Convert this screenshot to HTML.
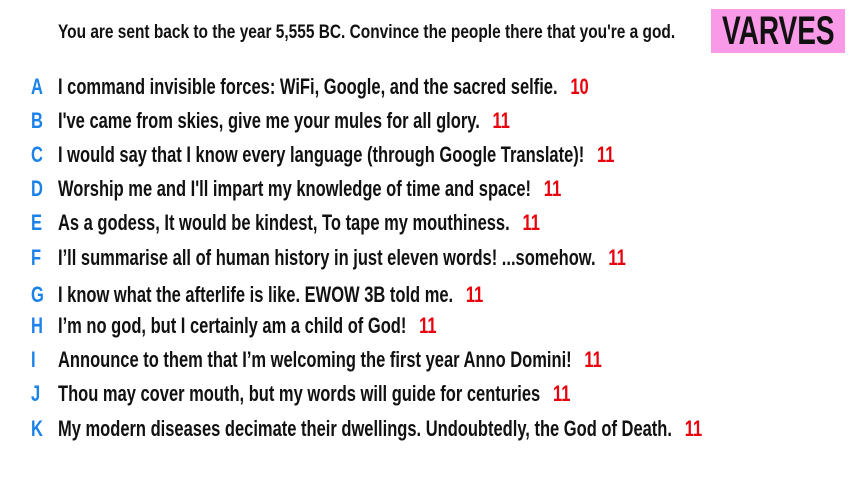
<!DOCTYPE html>
<html><head><meta charset="utf-8"><style>
html,body{margin:0;padding:0;width:853px;height:480px;background:#fff;overflow:hidden;font-family:"Liberation Sans",sans-serif;color:#111}
.t{position:absolute;white-space:nowrap;transform-origin:0 50%;}
.title{left:58px;top:22px;font-size:19px;font-weight:bold;transform:scaleX(0.813);}
.logo{position:absolute;left:711px;top:9px;width:134px;height:44px;background:#f99ae9;}
.logo span{position:absolute;left:11px;top:2px;font-size:40px;line-height:40px;font-weight:bold;transform:scaleX(0.70);transform-origin:0 0;color:#111;}
.row{position:absolute;left:0;height:30px;}
.row .l{position:absolute;left:31px;top:0;font-size:22px;font-weight:bold;color:#1a82e8;transform:scaleX(0.75);transform-origin:0 0}
.row .x{position:absolute;left:58px;top:0;font-size:22px;font-weight:bold;white-space:nowrap;transform:scaleX(0.75);transform-origin:0 0}
.n{color:#e8000b;margin-left:17px}
</style></head><body>
<div class="t title">You are sent back to the year 5,555 BC. Convince the people there that you're a god.</div>
<div class="logo"><span>VARVES</span></div>
<div class="row" style="top:74px"><span class="l">A</span><span class="x">I command invisible forces: WiFi, Google, and the sacred selfie.<span class="n">10</span></span></div>
<div class="row" style="top:108px"><span class="l">B</span><span class="x">I've came from skies, give me your mules for all glory.<span class="n">11</span></span></div>
<div class="row" style="top:142px"><span class="l">C</span><span class="x">I would say that I know every language (through Google Translate)!<span class="n">11</span></span></div>
<div class="row" style="top:176px"><span class="l">D</span><span class="x">Worship me and I'll impart my knowledge of time and space!<span class="n">11</span></span></div>
<div class="row" style="top:210px"><span class="l">E</span><span class="x">As a godess, It would be kindest, To tape my mouthiness.<span class="n">11</span></span></div>
<div class="row" style="top:245px"><span class="l">F</span><span class="x">I’ll summarise all of human history in just eleven words! ...somehow.<span class="n">11</span></span></div>
<div class="row" style="top:282px"><span class="l">G</span><span class="x">I know what the afterlife is like. EWOW 3B told me.<span class="n">11</span></span></div>
<div class="row" style="top:313px"><span class="l">H</span><span class="x">I’m no god, but I certainly am a child of God!<span class="n">11</span></span></div>
<div class="row" style="top:347px"><span class="l">I</span><span class="x">Announce to them that I’m welcoming the first year Anno Domini!<span class="n">11</span></span></div>
<div class="row" style="top:381px"><span class="l">J</span><span class="x">Thou may cover mouth, but my words will guide for centuries<span class="n">11</span></span></div>
<div class="row" style="top:416px"><span class="l">K</span><span class="x">My modern diseases decimate their dwellings. Undoubtedly, the God of Death.<span class="n">11</span></span></div>
</body></html>
